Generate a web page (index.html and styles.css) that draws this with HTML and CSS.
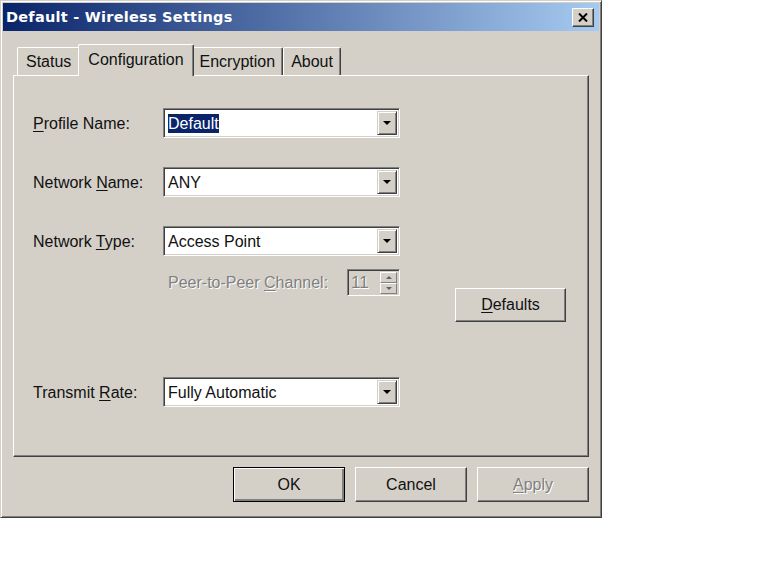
FILE: index.html
```html
<!DOCTYPE html>
<html lang="en">
<head>
  <meta charset="UTF-8">
  <title>Default - Wireless Settings</title>
  <link rel="stylesheet" href="styles.css">
</head>
<body>
  <div class="window">
    <div class="titlebar">
      <span class="title">Default - Wireless Settings</span>
      <div class="close">
        <svg width="10" height="9" viewBox="0 0 10 9">
          <path d="M1 0.5 L9 8.5 M9 0.5 L1 8.5" stroke="#000" stroke-width="2"/>
        </svg>
      </div>
    </div>

    <div class="tabs">
      <div class="tab first">Status</div>
      <div class="tab active">Configuration</div>
      <div class="tab">Encryption</div>
      <div class="tab">About</div>
    </div>

    <div class="panel">
      <div class="row">
        <label class="lbl"><u>P</u>rofile Name:</label>
        <div class="combo">
          <span class="value"><span class="selected">Default</span></span>
          <div class="drop"><span class="arrow"></span></div>
        </div>
      </div>
      <div class="row">
        <label class="lbl">Network <u>N</u>ame:</label>
        <div class="combo">
          <span class="value">ANY</span>
          <div class="drop"><span class="arrow"></span></div>
        </div>
      </div>
      <div class="row">
        <label class="lbl">Network <u>T</u>ype:</label>
        <div class="combo">
          <span class="value">Access Point</span>
          <div class="drop"><span class="arrow"></span></div>
        </div>
      </div>

      <div class="extra">
        <div class="peer">
          <span class="disabled">Peer-to-Peer <u>C</u>hannel:</span>
          <div class="spin">
            <span class="spin-value disabled">11</span>
            <div class="spin-btns">
              <div class="spin-btn"><span class="up"></span></div>
              <div class="spin-btn"><span class="down"></span></div>
            </div>
          </div>
        </div>
        <button class="btn defaults"><u>D</u>efaults</button>
      </div>

      <div class="row last">
        <label class="lbl">Transmit <u>R</u>ate:</label>
        <div class="combo">
          <span class="value">Fully Automatic</span>
          <div class="drop"><span class="arrow"></span></div>
        </div>
      </div>
    </div>

    <div class="buttons">
      <button class="btn default-btn">OK</button>
      <button class="btn">Cancel</button>
      <button class="btn"><span class="disabled"><u>A</u>pply</span></button>
    </div>
  </div>
</body>
</html>
```

FILE: styles.css
```css
body {
  margin: 0;
  background: #fff;
  font-family: "Liberation Sans", Arial, sans-serif;
  font-size: 16px;
  color: #111;
}

.window {
  box-sizing: border-box;
  width: 602px;
  height: 518px;
  padding: 2px;
  background: #d4d0c8;
  border: 1px solid;
  border-color: #d4d0c8 #404040 #404040 #d4d0c8;
  box-shadow: inset 1px 1px #fff, inset -1px -1px #808080;
}

.titlebar {
  height: 28px;
  display: flex;
  align-items: center;
  justify-content: space-between;
  padding: 0 5px 0 3px;
  background: linear-gradient(to right, #0a246a, #a6caf0);
}

.title {
  color: #fff;
  font-family: "DejaVu Sans", sans-serif;
  font-weight: bold;
  font-size: 14.5px;
  letter-spacing: 0.25px;
}

.close {
  box-sizing: border-box;
  width: 22px;
  height: 19px;
  margin-top: 1px;
  background: #d4d0c8;
  border: 1px solid;
  border-color: #fff #404040 #404040 #fff;
  box-shadow: inset -1px -1px #808080;
  display: flex;
  align-items: center;
  justify-content: center;
}

/* tabs */
.tabs {
  display: flex;
  align-items: flex-end;
  height: 44px;
  padding-left: 14px;
  position: relative;
  z-index: 1;
}

.tab {
  box-sizing: border-box;
  height: 28px;
  padding: 5px 7px 0 7px;
  border: 1px solid;
  border-bottom: none;
  border-color: #fff #404040 #fff #fff;
  box-shadow: inset -1px 0 #808080;
  border-radius: 2px 2px 0 0;
}

.tab.first {
  padding: 5px 8px 0 8px;
}

.tab.active {
  height: 32px;
  padding: 6px 9px 0 9px;
  margin: 0 -2px -1px -2px;
  background: #d4d0c8;
  position: relative;
}

.panel {
  box-sizing: border-box;
  height: 382px;
  margin: 0 10px 0 10px;
  padding: 32px 0 0 19px;
  border: 1px solid;
  border-color: #fff #404040 #404040 #fff;
  box-shadow: inset -1px -1px #808080;
}

.row {
  display: flex;
  align-items: center;
  height: 30px;
  margin-bottom: 29px;
}

.row.last {
  margin-top: 55px;
  margin-bottom: 0;
}

.lbl {
  width: 130px;
  padding-top: 2px;
}

u {
  text-decoration-thickness: 1px;
  text-underline-offset: 2px;
}

.combo {
  box-sizing: border-box;
  width: 237px;
  height: 30px;
  display: flex;
  align-items: center;
  justify-content: space-between;
  background: #fff;
  border: 1px solid;
  border-color: #808080 #fff #fff #808080;
  box-shadow: inset 1px 1px #404040, inset -1px -1px #d4d0c8;
  padding: 2px 2px 2px 3px;
}

.value {
  padding: 2px 0 0 1px;
}

.selected {
  background: #0a246a;
  color: #fff;
  padding: 1px 0;
}

.drop {
  box-sizing: border-box;
  width: 20px;
  height: 24px;
  background: #d4d0c8;
  border: 1px solid;
  border-color: #d4d0c8 #404040 #404040 #d4d0c8;
  box-shadow: inset 1px 1px #fff, inset -1px -1px #808080;
  display: flex;
  align-items: center;
  justify-content: center;
}

.arrow {
  width: 0;
  height: 0;
  border-left: 4px solid transparent;
  border-right: 4px solid transparent;
  border-top: 4px solid #000;
}

/* peer channel + defaults */
.extra {
  display: flex;
  margin-top: -16px;
}

.peer {
  width: 232px;
  margin-left: 135px;
  height: 27px;
  display: flex;
  align-items: center;
  justify-content: space-between;
}

.disabled {
  color: #808080;
  text-shadow: 1px 1px #fff;
}

.spin {
  box-sizing: border-box;
  width: 53px;
  height: 27px;
  display: flex;
  align-items: center;
  justify-content: space-between;
  background: #d4d0c8;
  border: 1px solid;
  border-color: #808080 #fff #fff #808080;
  box-shadow: inset 1px 1px #404040;
  padding: 2px 2px 1px 3px;
  font-size: 17px;
}

.spin-btns {
  display: flex;
  flex-direction: column;
}

.spin-btn {
  box-sizing: border-box;
  width: 17px;
  height: 11px;
  border: 1px solid;
  border-color: #fff #808080 #808080 #fff;
  display: flex;
  align-items: center;
  justify-content: center;
}

.up, .down {
  width: 0;
  height: 0;
  border-left: 3px solid transparent;
  border-right: 3px solid transparent;
}

.up { border-bottom: 3px solid #606060; }
.down { border-top: 3px solid #606060; }

.btn {
  box-sizing: border-box;
  width: 112px;
  height: 35px;
  font-family: inherit;
  font-size: 16px;
  color: #111;
  background: #d4d0c8;
  border: 1px solid;
  border-color: #fff #404040 #404040 #fff;
  box-shadow: inset -1px -1px #808080;
  padding: 0;
}

.defaults {
  width: 111px;
  height: 34px;
  margin: 19px 0 0 55px;
}

.buttons {
  display: flex;
  justify-content: flex-end;
  gap: 10px;
  margin: 10px 10px 0 0;
}

.default-btn {
  border: 1px solid #000;
  box-shadow: inset 1px 1px #fff, inset -2px -2px #808080, inset -1px -1px #404040;
}
```
